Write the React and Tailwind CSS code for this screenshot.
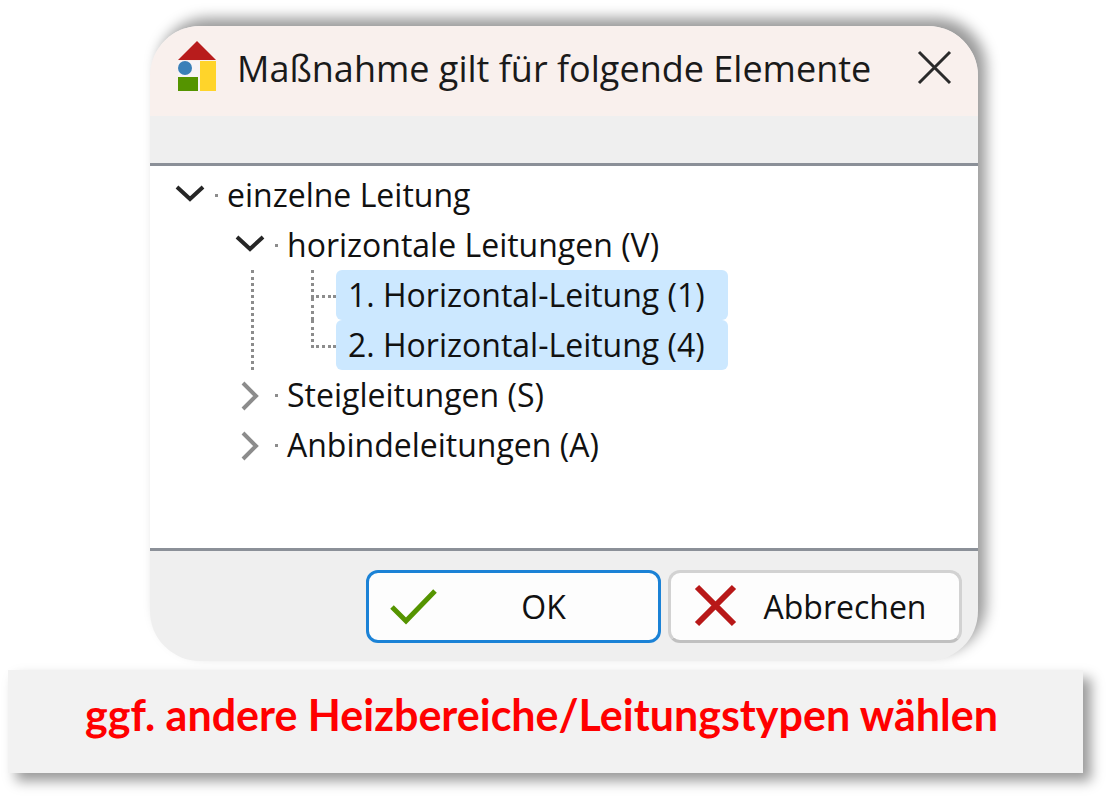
import { useState } from 'react'

const tree = {
  label: 'einzelne Leitung',
  children: [
    {
      label: 'horizontale Leitungen (V)',
      open: true,
      children: ['1. Horizontal-Leitung (1)', '2. Horizontal-Leitung (4)'],
    },
    { label: 'Steigleitungen (S)', children: [] },
    { label: 'Anbindeleitungen (A)', children: [] },
  ],
}

function HouseIcon() {
  return (
    <svg className="h-14 w-10 shrink-0" viewBox="0 0 40 56" aria-hidden="true">
      <rect x="1" y="20" width="38" height="30" fill="#f8f4f6" />
      <path d="M20 0 L39 19 H1 Z" fill="#b81c1c" />
      <circle cx="8" cy="27" r="7" fill="#3a80b8" />
      <rect x="1" y="36" width="20" height="14" fill="#559400" />
      <rect x="23" y="20" width="16" height="30" fill="#ffd42a" />
    </svg>
  )
}

function Chevron({ open }) {
  return (
    <svg className="h-8 w-8" viewBox="0 0 32 32" fill="none" aria-hidden="true">
      {open ? (
        <path d="M3 8 L16 20 L29 8" stroke="#262626" strokeWidth="4" />
      ) : (
        <path d="M9 4 L22 17 L9 30" stroke="#8c8c8c" strokeWidth="4" />
      )}
    </svg>
  )
}

function BranchRow({ label, open, onToggle }) {
  return (
    <div className="flex h-[50px] items-center gap-[9px]">
      <button type="button" aria-label={label} aria-expanded={open} onClick={onToggle}>
        <Chevron open={open} />
      </button>
      <span className="h-[3px] w-[3px] bg-[#8c8c8c]" />
      <span className="whitespace-nowrap">{label}</span>
    </div>
  )
}

// Selected leaf with the dotted connector in front of it
function LeafRow({ label, last }) {
  return (
    <li role="treeitem" aria-selected="true" className="flex h-[50px] pl-[57px]">
      <span className="flex w-[25px] flex-col">
        <span className="h-[28px] border-b-[3px] border-l-[3px] border-dotted border-[#8c8c8c]" />
        {!last && <span className="flex-1 border-l-[3px] border-dotted border-[#8c8c8c]" />}
      </span>
      <span className="flex w-[392px] items-center whitespace-nowrap rounded-md bg-[#cce8ff] px-3">
        {label}
      </span>
    </li>
  )
}

function Branch({ node }) {
  const [open, setOpen] = useState(Boolean(node.open))
  return (
    <li role="treeitem">
      <BranchRow label={node.label} open={open} onToggle={() => setOpen(!open)} />
      {open && (
        <ul role="group" className="ml-[17px] border-l-[3px] border-dotted border-[#8c8c8c]">
          {node.children.map((label, i) => (
            <LeafRow key={label} label={label} last={i === node.children.length - 1} />
          ))}
        </ul>
      )}
    </li>
  )
}

function Tree() {
  const [open, setOpen] = useState(true)
  return (
    <ul
      role="tree"
      className="min-h-[388px] border-y-[3px] border-[#8b9098] bg-white pl-6 pt-1 text-[32px] text-[#111]"
    >
      <li role="treeitem">
        <BranchRow label={tree.label} open={open} onToggle={() => setOpen(!open)} />
        {open && (
          <ul role="group" className="pl-[60px]">
            {tree.children.map((node) => (
              <Branch key={node.label} node={node} />
            ))}
          </ul>
        )}
      </li>
    </ul>
  )
}

function Dialog() {
  return (
    <section
      role="dialog"
      aria-labelledby="dialog-title"
      className="ml-[142px] mr-[105px] overflow-hidden rounded-[50px] bg-[#efefef] shadow-[8px_-8px_14px_rgba(0,0,0,0.4)]"
    >
      <header className="flex h-[90px] items-center bg-[#f9f0ed] pb-1 pl-[27px] pr-6">
        <HouseIcon />
        <h1 id="dialog-title" className="ml-5 flex-1 whitespace-nowrap text-[36px] text-[#1a1a1a]">
          Maßnahme gilt für folgende Elemente
        </h1>
        <button type="button" aria-label="Schließen">
          <svg className="h-10 w-10" viewBox="0 0 40 40" fill="none" aria-hidden="true">
            <path d="M5 3 L36 34 M36 3 L5 34" stroke="#2a2a2a" strokeWidth="3" />
          </svg>
        </button>
      </header>
      <div className="h-[47px]" />
      <Tree />
      <footer className="flex justify-end gap-[7px] pb-[18px] pl-4 pr-4 pt-[19px] text-[32px] text-[#111]">
        <button
          type="button"
          className="flex h-[73px] w-[295px] items-center rounded-xl border-[3px] border-[#1b82d6] bg-[#fdfdfd] pl-5"
        >
          <svg className="h-10 w-12" viewBox="0 0 48 40" fill="none" aria-hidden="true">
            <path d="M3 20 L17 34 L46 4" stroke="#559400" strokeWidth="5" />
          </svg>
          <span className="flex-1 pr-2">OK</span>
        </button>
        <button
          type="button"
          className="flex h-[73px] w-[294px] items-center rounded-xl border-[3px] border-[#d2d2d2] border-b-[#c0c0c0] bg-[#fdfdfd] pl-5"
        >
          <svg className="h-12 w-12" viewBox="0 0 48 48" fill="none" aria-hidden="true">
            <path d="M6 4 L43 41 M43 4 L6 41" stroke="#b81818" strokeWidth="6" />
          </svg>
          <span className="flex-1 pr-2">Abbrechen</span>
        </button>
      </footer>
    </section>
  )
}

export default function App() {
  return (
    <main className="flex flex-col gap-[9px] overflow-hidden bg-white pb-[27px] pl-2 pr-[26px] pt-[26px] font-['Open_Sans','Noto_Sans',sans-serif]">
      <Dialog />
      <p className="flex h-[103px] items-center justify-center whitespace-nowrap bg-[#f2f2f2] pb-3 pr-2 font-['Lato',sans-serif] text-[43px] font-bold text-[#ff0000] shadow-[8px_8px_12px_rgba(0,0,0,0.4)]">
        ggf. andere Heizbereiche/Leitungstypen wählen
      </p>
    </main>
  )
}
